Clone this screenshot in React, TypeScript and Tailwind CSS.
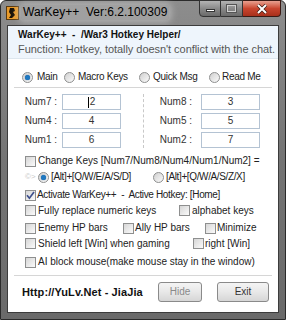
import React from "react";

function Check({ checked }: { checked?: boolean }) {
  return (
    <span className="w-[11px] h-[11px] shrink-0 border border-[#8e8f8f] bg-linear-to-br from-[#d6d6d6] to-[#fbfbfb] flex items-center justify-center">
      {checked && (
        <svg width="9" height="9" viewBox="0 0 9 9">
          <path d="M1 4.2 L3.4 7.2 L8 1" fill="none" stroke="#3d4f8c" strokeWidth="1.7" />
        </svg>
      )}
    </span>
  );
}

function Radio({ on }: { on?: boolean }) {
  return (
    <span className="w-[11px] h-[11px] shrink-0 rounded-full border border-[#8e8f8f] bg-linear-to-br from-[#d0d0d0] to-[#fbfbfb] flex items-center justify-center">
      {on && <span className="w-[5px] h-[5px] rounded-full bg-[#1f78c1] shadow-[0_0_1px_#0b4f8a]" />}
    </span>
  );
}

function Field({ label, value, caret, gap }: { label: string; value: string; caret?: boolean; gap: "l" | "r" }) {
  return (
    <div className="flex items-center h-[16px]">
      <span className="w-[35px] text-right text-[#333]">{label}</span>
      <span
        className={
          (gap === "l" ? "ml-[5px] " : "ml-[9px] ") +
          "w-[59px] h-[16px] border border-[#b4c3d3] bg-white flex items-center justify-center text-[#333] leading-none"
        }
      >
        {caret && <span className="w-px h-[11px] bg-black mr-px" />}
        {value}
      </span>
    </div>
  );
}

export default function App() {
  return (
    <div className="w-[286px] h-[320px] overflow-hidden bg-white whitespace-nowrap">
      <div className="w-[286px] h-[320px] flex flex-col rounded-t-[6px] border border-[#2b2b2b] bg-linear-to-b from-[#8d8d8d] via-[#747474] to-[#6a6a6a] font-['Liberation_Sans',Arial,sans-serif] text-[10px] leading-[12px]">
        {/* Title bar */}
        <div className="h-[24px] flex items-start">
          <div className="mt-[5px] ml-[5px] w-[13px] h-[14px] bg-[#e89a2a] border border-[#5a3a10] flex items-center justify-center">
            <svg width="11" height="12" viewBox="0 0 11 12">
              <path d="M3 1 L7 1 L8 4 L6 5 L8 8 L5 11 L2 11 L4 8 L2 5 Z" fill="#1a1208" />
            </svg>
          </div>
          <span className="mt-[4px] ml-[2px] text-[12px] text-black px-[2px] rounded-[4px] bg-[#a9a9a9]/70 shadow-[0_0_6px_3px_rgba(200,200,200,0.55)] leading-[15px]">
            WarKey++&nbsp; Ver:6.2.100309
          </span>
          <div className="ml-auto mr-[4px] flex h-[17px] -mt-px">
            <div className="w-[22px] h-full border border-[#333] rounded-bl-[4px] bg-linear-to-b from-[#b4b4b4] via-[#8a8a8a] to-[#6a6a6a] flex items-center justify-center">
              <span className="w-[9px] h-[3px] bg-white border border-[#333] mt-[3px]" />
            </div>
            <div className="w-[22px] h-full border-y border-r border-[#333] bg-linear-to-b from-[#b4b4b4] via-[#8a8a8a] to-[#6a6a6a] flex items-center justify-center">
              <span className="w-[9px] h-[7px] border border-[#d0d0d0] shadow-[0_0_0_1px_#555]" />
            </div>
            <div className="w-[38px] h-full border-y border-r border-[#3a1a14] rounded-br-[4px] bg-linear-to-b from-[#e8a090] via-[#c9452e] to-[#a8301c] flex items-center justify-center">
              <svg width="12" height="10" viewBox="0 0 12 10">
                <path d="M2 1 L10 9 M10 1 L2 9" stroke="#3a1a14" strokeWidth="3.4" />
                <path d="M2 1 L10 9 M10 1 L2 9" stroke="#fff" strokeWidth="2" />
              </svg>
            </div>
          </div>
        </div>

        {/* Client */}
        <div className="mx-[6px] h-[288px] border border-[#3c3c3c] bg-white flex flex-col">
          <div className="h-[33px] shrink-0 bg-[#eef5fc] border-b border-[#dde6ee] pl-[10px] pt-[2px] flex flex-col">
            <span className="font-bold text-[10px] leading-[14px] text-[#111]">
              WarKey++&nbsp; -&nbsp; /War3 Hotkey Helper/
            </span>
            <span className="text-[11px] leading-[15px] text-[#555] tracking-[-0.05px]">
              Function: Hotkey, totally doesn't conflict with the chat.
            </span>
          </div>

          {/* tabs */}
          <div className="h-[28px] shrink-0 pt-[8px] flex items-center pl-[14px] text-[#222] tracking-[-0.3px]">
            <Radio on />
            <span className="ml-[4px] w-[27px]">Main</span>
            <Radio />
            <span className="ml-[3px] w-[61px]">Macro Keys</span>
            <Radio />
            <span className="ml-[3px] w-[56px]">Quick Msg</span>
            <Radio />
            <span className="ml-[2px]">Read Me</span>
          </div>
          <div className="mx-[6px] h-px shrink-0 bg-[#d6d6d6]" />

          {/* Num fields */}
          <div className="flex mt-[6px] h-[54px] shrink-0">
            <div className="w-[127px] pl-[14px] flex flex-col gap-[3px]">
              <Field label="Num7 :" value="2" caret gap="l" />
              <Field label="Num4 :" value="4" gap="l" />
              <Field label="Num1 :" value="6" gap="l" />
            </div>
            <div className="w-0 border-l border-dashed border-[#c8c8c8] h-[54px] ml-[8px]" />
            <div className="pl-[13px] flex flex-col gap-[3px]">
              <Field label="Num8 :" value="3" gap="r" />
              <Field label="Num5 :" value="5" gap="r" />
              <Field label="Num2 :" value="7" gap="r" />
            </div>
          </div>

          <div className="flex flex-col text-[#222] pl-[17px]">
            <div className="h-[16px] mt-[5px] flex items-center">
              <Check />
              <span className="ml-[2px]">Change Keys [Num7/Num8/Num4/Num1/Num2] =</span>
            </div>
            <div className="h-[16px] flex items-center">
              <span className="w-[13px] text-[8px] text-[#c8c8c8] leading-none">©&gt;</span>
              <Radio on />
              <span className="ml-[2px] w-[102px] tracking-[-0.37px]">[Alt]+[Q/W/E/A/S/D]</span>
              <Radio />
              <span className="ml-[2px] tracking-[-0.37px]">[Alt]+[Q/W/A/S/Z/X]</span>
            </div>
            <div className="h-[16px] mt-[2px] flex items-center">
              <Check checked />
              <span className="ml-[1px] tracking-[-0.35px]">Activate WarKey++&nbsp; -&nbsp; Active Hotkey: [Home]</span>
            </div>
            <div className="h-[15px] flex items-center">
              <Check />
              <span className="ml-[2px] w-[141px]">Fully replace numeric keys</span>
              <Check />
              <span className="ml-[2px]">alphabet keys</span>
            </div>
            <div className="h-[16px] mt-[2px] flex items-center">
              <Check />
              <span className="ml-[2px] w-[85px]">Enemy HP bars</span>
              <Check />
              <span className="ml-[1px] w-[70px]">Ally HP bars</span>
              <Check />
              <span className="ml-[1px]">Minimize</span>
            </div>
            <div className="h-[15px] flex items-center">
              <Check />
              <span className="ml-[2px] w-[155px]">Shield left [Win] when gaming</span>
              <Check />
              <span className="ml-[1px]">right [Win]</span>
            </div>
            <div className="h-[16px] mt-[3px] flex items-center">
              <Check />
              <span className="ml-[2px]">AI block mouse(make mouse stay in the window)</span>
            </div>
          </div>

          <div className="mx-[6px] mt-[5px] h-px shrink-0 bg-[#d6d6d6]" />

          <div className="flex items-center mt-[6px] pl-[14px]">
            <span className="font-bold text-[11px] text-[#111] tracking-[0.1px] w-[136px] shrink-0">
              Http://YuLv.Net - JiaJia
            </span>
            <button className="w-[44px] h-[20px] shrink-0 rounded-[3px] border border-[#8a8a8a] bg-linear-to-b from-[#f4f4f4] via-[#e8e8e8] to-[#d6d6d6] text-[10px] text-[#8a8a8a]">
              Hide
            </button>
            <button className="ml-[15px] w-[52px] h-[20px] shrink-0 rounded-[3px] border border-[#8a8a8a] bg-linear-to-b from-[#f4f4f4] via-[#e8e8e8] to-[#d6d6d6] text-[10px] text-[#333]">
              Exit
            </button>
          </div>
        </div>
      </div>
    </div>
  );
}
